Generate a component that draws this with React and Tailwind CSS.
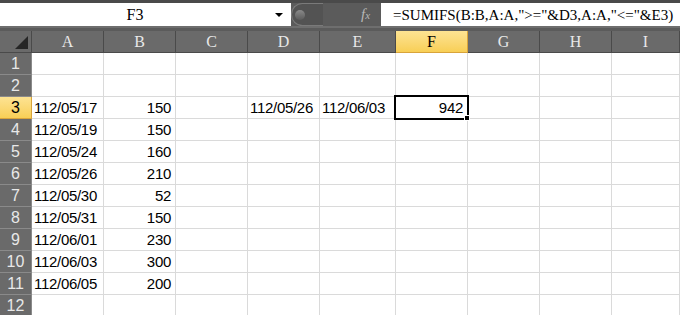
const cols = ["A", "B", "C", "D", "E", "F", "G", "H", "I"]

const rows = {
  3: { A: "112/05/17", B: "150", D: "112/05/26", E: "112/06/03", F: "942" },
  4: { A: "112/05/19", B: "150" },
  5: { A: "112/05/24", B: "160" },
  6: { A: "112/05/26", B: "210" },
  7: { A: "112/05/30", B: "52" },
  8: { A: "112/05/31", B: "150" },
  9: { A: "112/06/01", B: "230" },
  10: { A: "112/06/03", B: "300" },
  11: { A: "112/06/05", B: "200" },
  12: {},
}

const cellFont = { fontFamily: "'Liberation Sans', Arial, sans-serif" }
const serif = { fontFamily: "'Liberation Serif', 'Times New Roman', serif" }

function Cell({ value, active }) {
  const isNum = value && /^\d+$/.test(value)
  return (
    <div className="relative h-[22px] border-r border-b border-[#dadada] bg-white">
      <div
        className={`flex h-full items-end pb-[2px] text-[15px] leading-4 tracking-[-0.3px] text-black ${isNum ? "justify-end pr-[4px]" : "pl-[2px]"}`}
        style={cellFont}
      >
        {value}
      </div>
      {active && (
        <>
          <div className="absolute -left-[2px] -top-[2px] z-10 h-[25px] w-[75px] border-2 border-black" />
          <div className="absolute -right-[3px] -bottom-[3px] z-20 h-[6px] w-[6px] border border-white bg-black" />
        </>
      )}
    </div>
  )
}

export default function App() {
  return (
    <div className="h-[315px] w-[680px] overflow-hidden bg-white">
      {/* formula bar */}
      <div className="flex h-[31px] flex-col bg-[#5b5b5b]">
        <div className="h-[3px] bg-[#4a4a4a]" />
        <div className="flex h-[23px]">
          <div className="relative flex w-[291px] items-center bg-white">
            <span className="w-[270px] text-center text-[16px] text-black" style={serif}>
              F3
            </span>
            <span className="ml-[5px] h-0 w-0 border-x-[4px] border-t-[4px] border-x-transparent border-t-black" />
          </div>
          <div className="flex w-[90px] items-center">
            <div className="flex h-[23px] w-[32px] items-center rounded-l-full border border-[#7a7a7a] border-r-0 bg-[#535353] pl-[3px]">
              <div className="h-[10px] w-[10px] rounded-full bg-gradient-to-b from-[#8a8a8a] to-[#5c5c5c]" />
            </div>
            <span className="ml-[38px] text-[15px] italic text-[#b8b8b8]" style={serif}>
              f<span className="text-[11px]">x</span>
            </span>
          </div>
          <div
            className="flex flex-1 items-center bg-white pl-[12px] pt-[2px] text-[15px] text-black"
            style={serif}
          >
            =SUMIFS(B:B,A:A,"&gt;="&amp;D3,A:A,"&lt;="&amp;E3)
          </div>
        </div>
        <div className="h-[2px] bg-[#6e6e6e]" />
      </div>

      {/* sheet grid */}
      <div className="grid grid-cols-[32px_72px_72px_72px_72px_76px_72px_72px_72px_1fr]">
        <div className="flex h-[22px] items-end justify-end border-r border-b border-[#4a4a4a] bg-[#6a6a6a] pb-[3px] pr-[3px]">
          <svg width="13" height="13" viewBox="0 0 13 13" className="block shrink-0">
            <polygon points="13,0 13,13 0,13" fill="#262626" />
          </svg>
        </div>
        {cols.map((c) => (
          <div
            key={c}
            className={`flex h-[22px] items-center justify-center border-r border-b text-[16px] ${
              c === "F"
                ? "border-[#d9a43a] bg-gradient-to-b from-[#fde392] to-[#f8cf55] text-black"
                : "border-[#4a4a4a] bg-[#6a6a6a] text-[#e8e8e8]"
            }`}
            style={serif}
          >
            {c}
          </div>
        ))}

        {Array.from({ length: 12 }, (_, i) => i + 1).map((r) => (
          <Row key={r} r={r} />
        ))}
      </div>
    </div>
  )
}

function Row({ r }) {
  const data = rows[r] || {}
  const sel = r === 3
  return (
    <>
      <div
        className={`flex h-[22px] items-center justify-center border-r border-b text-[16px] ${
          sel
            ? "border-[#d9a43a] bg-gradient-to-b from-[#fde392] to-[#f8cf55] text-black"
            : "border-[#8a8a8a] bg-[#6a6a6a] text-[#e8e8e8]"
        }`}
        style={cellFont}
      >
        {r}
      </div>
      {cols.map((c) => (
        <Cell key={c} value={data[c]} active={r === 3 && c === "F"} />
      ))}
    </>
  )
}
